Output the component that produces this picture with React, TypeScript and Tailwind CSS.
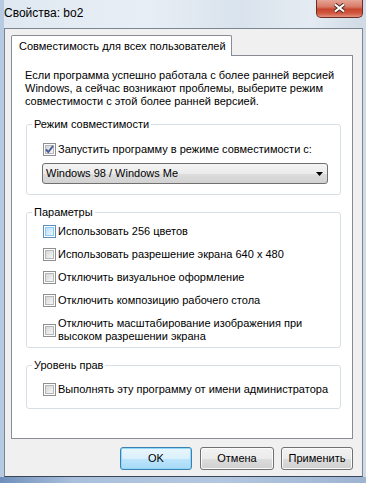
import React from "react"

// чекбокс в стиле Windows 7
function CheckBox({ checked = false, hot = false }: { checked?: boolean; hot?: boolean }) {
  return (
    <span
      className={`relative block w-[13px] h-[13px] shrink-0 border p-px bg-white ${
        hot ? "border-[#5b8fba]" : "border-[#8e8f8f]"
      }`}
    >
      <span
        className={`block w-full h-full border ${
          hot
            ? "border-[#8ec9f0] bg-[linear-gradient(135deg,#b9e1fb,#e8f6fe)]"
            : "border-[#b3b7bb] bg-[linear-gradient(135deg,#d6d6d6,#f7f7f7)]"
        }`}
      />
      {checked && (
        <svg className="absolute left-0 top-0" width="11" height="11" viewBox="0 0 11 11">
          <path d="M2 5.5 L4.3 8 L9 2" fill="none" stroke="#4a5f97" strokeWidth="2" />
        </svg>
      )}
    </span>
  )
}

function Option({ children, checked, hot }: { children: React.ReactNode; checked?: boolean; hot?: boolean }) {
  return (
    <div className="flex items-center gap-[2px]">
      <CheckBox checked={checked} hot={hot} />
      <span className="leading-[13px] whitespace-nowrap">{children}</span>
    </div>
  )
}

function Group({ title, className, children }: { title: string; className: string; children: React.ReactNode }) {
  return (
    <fieldset className={`ml-px w-[315px] border border-[#d5dfe5] rounded-[3px] ${className}`}>
      <legend className="ml-[5px] px-[2px] leading-[13px]">{title}</legend>
      {children}
    </fieldset>
  )
}

function WinButton({ label, primary = false, width }: { label: string; primary?: boolean; width: string }) {
  return (
    <button
      className={`${width} h-[23px] rounded-[3px] border leading-[13px] ${
        primary
          ? "border-[#3c7fb1] bg-[linear-gradient(#eaf6fd,#d9f0fc_50%,#bee6fd_50%,#a7d9f5)] shadow-[inset_0_0_0_1px_#8fd8fa]"
          : "border-[#707070] bg-[linear-gradient(#f2f2f2,#ebebeb_50%,#dddddd_50%,#cfcfcf)] shadow-[inset_0_0_0_1px_#fbfbfb]"
      }`}
    >
      {label}
    </button>
  )
}

export default function App() {
  return (
    <div className="w-[366px] h-[483px] flex flex-col overflow-hidden text-[11px] text-black font-['Liberation_Sans',Arial,sans-serif] bg-[linear-gradient(90deg,#b6cbe1_0px,#b6cbe1_4px,#dfe8f1_4px,#e8eef5_40%,#d9e3ed_65%,#e4ebf2_85%,#cfdae6)]">
      {/* заголовок окна */}
      <div className="h-[28px] shrink-0 flex items-start">
        <span className="pl-[4px] pt-[7px] leading-[13px] text-[12px]">Свойства: bo2</span>
        <div className="ml-auto mr-[3px] w-[47px] h-[18px] rounded-b-[5px] border border-t-0 border-[#6d2c24] bg-[linear-gradient(#e6a595,#d77b67_40%,#c8442d_55%,#d25a43_80%,#e39483)] flex justify-center pt-[3px]">
          <svg width="13" height="10" viewBox="0 0 13 10">
            <path d="M2 1.5 L11 8.5 M11 1.5 L2 8.5" stroke="#4a2a26" strokeWidth="4" />
            <path d="M2 1.5 L11 8.5 M11 1.5 L2 8.5" stroke="#ffffff" strokeWidth="2.2" />
          </svg>
        </div>
      </div>

      {/* клиентская область */}
      <div className="ml-[4px] w-[359px] h-[449px] shrink-0 border border-[#7d8592] border-b-[#3c4656] bg-[#f0f0f0] flex flex-col pt-[6px] pl-[6px] pr-[9px]">
        <div className="relative z-10 -mb-px w-[221px] h-[21px] border-l border-t border-r border-[#898c95] rounded-t-[2px] bg-white pl-[7px] pt-[2px]">
          <span className="leading-[13px] whitespace-nowrap">Совместимость для всех пользователей</span>
        </div>

        <div className="h-[384px] border border-[#898c95] bg-white pt-[13px] pl-[13px]">
          <p className="leading-[13px] whitespace-nowrap">
            Если программа успешно работала с более ранней версией
            <br />
            Windows, а сейчас возникают проблемы, выберите режим
            <br />
            совместимости с этой более ранней версией.
          </p>

          <Group title="Режим совместимости" className="mt-[10px]">
            <div className="pl-[16px] pt-[12px] pb-[10px]">
              <Option checked>Запустить программу в режиме совместимости с:</Option>
              <div className="-ml-px mt-[7px] w-[286px] h-[21px] rounded-[3px] border border-[#707070] bg-[linear-gradient(#f4f4f4,#ebebeb_50%,#dddddd_50%,#d2d2d2)] flex items-center pl-[3px] pr-[4px]">
                <span className="leading-[13px]">Windows 98 / Windows Me</span>
                <svg className="ml-auto" width="7" height="4" viewBox="0 0 7 4">
                  <path d="M0 0 H7 L3.5 4 Z" fill="#000" />
                </svg>
              </div>
            </div>
          </Group>

          <Group title="Параметры" className="mt-[11px]">
            <div className="pl-[16px] pt-[6px] pb-[4px] flex flex-col gap-[10px]">
              <Option hot>Использовать 256 цветов</Option>
              <Option>Использовать разрешение экрана 640 x 480</Option>
              <Option>Отключить визуальное оформление</Option>
              <Option>Отключить композицию рабочего стола</Option>
              <Option>
                Отключить масштабирование изображения при
                <br />
                высоком разрешении экрана
              </Option>
            </div>
          </Group>

          <Group title="Уровень прав" className="mt-[11px]">
            <div className="pl-[16px] pt-[11px] pb-[12px]">
              <Option>Выполнять эту программу от имени администратора</Option>
            </div>
          </Group>
        </div>

        <div className="mt-[8px] flex justify-end">
          <WinButton label="OK" primary width="w-[72px]" />
          <div className="w-[8px]" />
          <WinButton label="Отмена" width="w-[74px]" />
          <div className="w-[7px]" />
          <WinButton label="Применить" width="w-[72px]" />
        </div>
      </div>

      {/* нижняя рамка */}
      <div className="flex-1 bg-[linear-gradient(90deg,#6f8fbb,#a9c0dc_20%,#b3c7df_60%,#9db4d2)]" />
    </div>
  )
}
